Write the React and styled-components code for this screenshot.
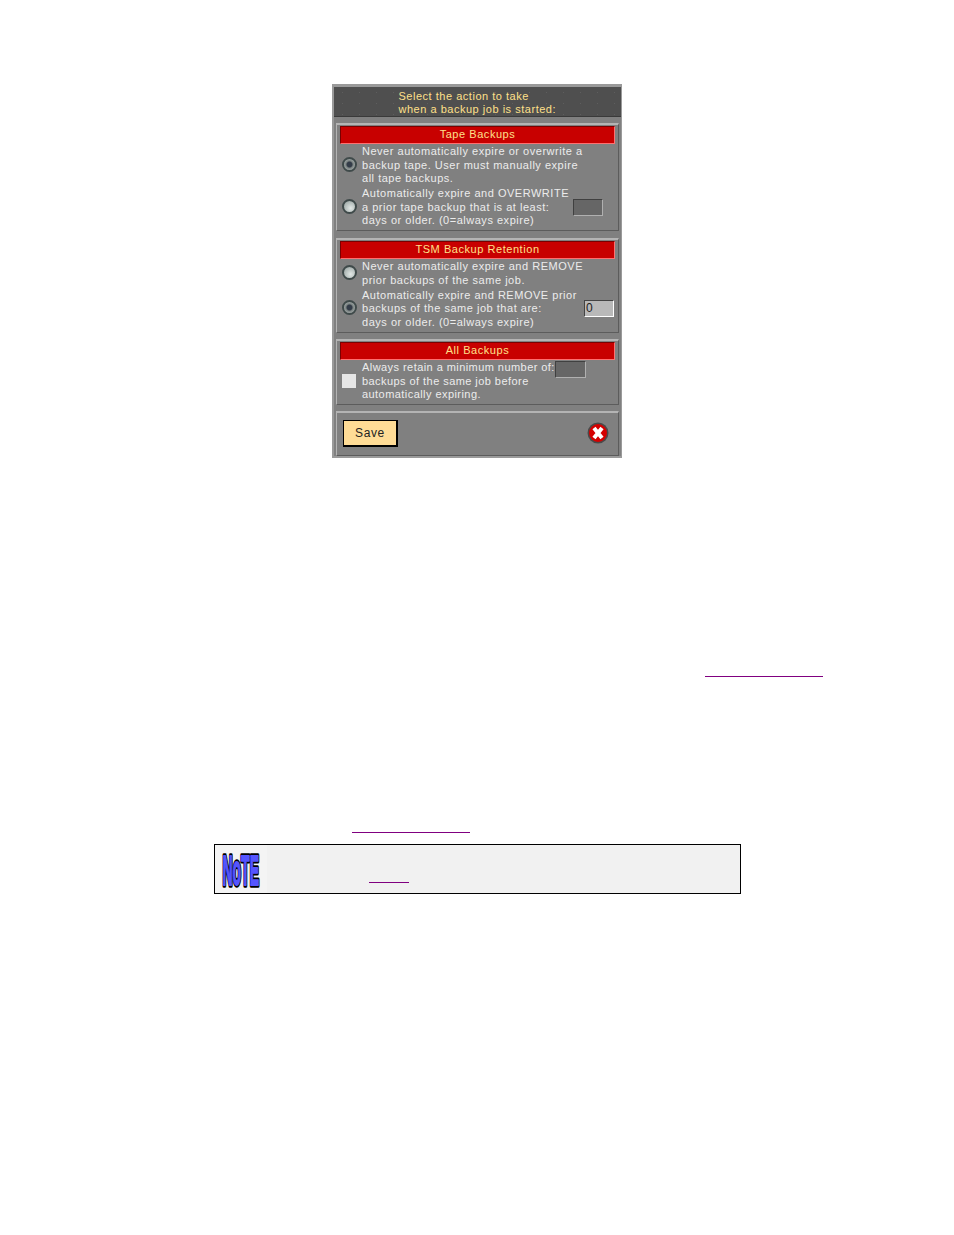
import React from "react";
import styled, { createGlobalStyle } from "styled-components";

const Global = createGlobalStyle`
  html, body { margin: 0; padding: 0; background: #fff; }
  body { font-family: "Liberation Sans", Arial, sans-serif; }
`;

const Page = styled.div`
  width: 954px;
  height: 1235px;
  padding-top: 84px;
  box-sizing: border-box;
  display: flex;
  flex-direction: column;
  overflow: hidden;
`;

const Dialog = styled.div`
  width: 290px;
  height: 374px;
  margin: 0 auto;
  box-sizing: border-box;
  background: #808080;
  border: 2px solid #9a9a9a;
  border-top-width: 3px;
  border-right-width: 1px;
  display: flex;
  flex-direction: column;
`;

const TitleBar = styled.div`
  height: 30px;
  background-color: #4f4f4f;
  background-image: radial-gradient(circle, #5e5e5e 0 0.6px, transparent 1px);
  background-size: 17px 11px;
  border-bottom: 1px solid #3a3a3a;
  color: #ffe08a;
  font-size: 11px;
  letter-spacing: 0.52px;
  line-height: 13px;
  display: flex;
  justify-content: center;
  padding-top: 3px;
  box-sizing: border-box;
`;

const TitleText = styled.div`
  width: 158px;
  white-space: nowrap;
`;

const Section = styled.div`
  height: ${(p) => p.$h}px;
  margin: ${(p) => p.$top}px 2px 0 2px;
  box-sizing: border-box;
  border: solid;
  border-color: #b4b4b4 #5c5c5c #5c5c5c #b4b4b4;
  border-width: 2px 1px 1px 1px;
  padding: 1px 3px 0 3px;
`;

const SectionHeader = styled.div`
  height: 18px;
  margin-bottom: 1px;
  box-sizing: border-box;
  background: #c80000;
  border: 1px solid;
  border-color: #7a0000 #ff7070 #ff7070 #7a0000;
  color: #ffe08a;
  font-size: 11px;
  letter-spacing: 0.55px;
  line-height: 15px;
  text-align: center;
`;

const Row = styled.div`
  display: flex;
  align-items: ${(p) => (p.$top ? "flex-start" : "center")};
  height: ${(p) => p.$lines * 13.7}px;
  margin-bottom: 1px;
`;

const Radio = styled.span`
  flex: none;
  width: 15px;
  height: 15px;
  margin: 0 5px 2px 2px;
  box-sizing: border-box;
  border-radius: 50%;
  border: 2px solid #3f4a4a;
  background: ${(p) =>
    p.$on
      ? "radial-gradient(circle, #333c48 0 2.5px, #78807f 3.5px, #c8d0cf 100%)"
      : "radial-gradient(circle at 60% 65%, #e2e8e6 0, #a9b3b1 70%, #8d9795 100%)"};
`;

const Check = styled.span`
  flex: none;
  align-self: center;
  width: 14px;
  height: 14px;
  margin: 0 6px 2px 2px;
  background: #e6e6e6;
`;

const Label = styled.div`
  flex: none;
  width: ${(p) => p.$w}px;
  color: #ececec;
  font-size: 11px;
  letter-spacing: ${(p) => (p.$tight ? 0.44 : 0.52)}px;
  line-height: 13.5px;
  white-space: nowrap;
`;

const Field = styled.div`
  flex: none;
  width: ${(p) => p.$w || 30}px;
  height: 17px;
  box-sizing: border-box;
  margin-bottom: ${(p) => (p.$raised ? 1 : 0)}px;
  background: ${(p) => (p.$filled ? "#b9b9b9" : "#666")};
  border: 1px solid;
  border-color: ${(p) =>
    p.$filled ? "#444 #fff #fff #444" : "#404040 #b0b0b0 #b0b0b0 #404040"};
  color: #222;
  font-size: 12px;
  line-height: 15px;
  padding-left: 1px;
`;

const ActionBar = styled(Section)`
  display: flex;
  align-items: center;
  justify-content: space-between;
  padding: 0 9px 2px 6px;
`;

const SaveButton = styled.button`
  width: 55px;
  height: 27px;
  padding: 0;
  box-sizing: border-box;
  background: #ffdc96;
  border: 1px solid #000;
  border-width: 1px 2px 2px 1px;
  color: #222;
  font-family: inherit;
  font-size: 12px;
  letter-spacing: 0.6px;
`;

const CloseIcon = () => (
  <svg width="22" height="22" viewBox="0 0 22 22">
    <circle cx="11" cy="11" r="10.5" fill="#4a4a4a" />
    <circle cx="11" cy="11" r="9" fill="#d40000" />
    <path d="M7 6 L15 16 M15 6 L7 16" stroke="#fff" strokeWidth="4" />
  </svg>
);

const LinkRow = styled.div`
  height: 1px;
  margin-top: ${(p) => p.$top}px;
  padding-left: ${(p) => p.$left}px;
`;

const Rule = styled.a`
  display: block;
  width: ${(p) => p.$w}px;
  height: 1px;
  background: #800080;
`;

const Note = styled.div`
  width: 527px;
  height: 50px;
  margin: 11px 0 0 214px;
  box-sizing: border-box;
  border: 1px solid #000;
  background: #f1f1f1;
  display: flex;
`;

const NoteIconCell = styled.div`
  width: 52px;
  background: #f4f4f4;
  padding-left: 6px;
  box-sizing: border-box;
`;

const NoteBody = styled.div`
  padding: 37px 0 0 102px;
`;

const LogoText = styled.text`
  font-family: "Liberation Sans", sans-serif;
  font-weight: 700;
  font-size: 20px;
  fill: #5555ff;
  stroke: ${(p) => p.$edge};
  stroke-width: ${(p) => p.$sw};
  stroke-linejoin: round;
`;

const NoteLogo = () => (
  <svg width="40" height="48" viewBox="-2 -19 57 23" preserveAspectRatio="none">
    <LogoText $edge="#000" $sw={2.6}>NoTE</LogoText>
    <LogoText $edge="#5555ff" $sw={0.9} aria-hidden="true">NoTE</LogoText>
  </svg>
);

export default function App() {
  return (
    <Page>
      <Global />
      <Dialog>
        <TitleBar>
          <TitleText>
            Select the action to take
            <br />
            when a backup job is started:
          </TitleText>
        </TitleBar>

        <Section $top={6} $h={108}>
          <SectionHeader>Tape Backups</SectionHeader>
          <Row $lines={3}>
            <Radio $on />
            <Label $w={211}>
              Never automatically expire or overwrite a
              <br />
              backup tape. User must manually expire
              <br />
              all tape backups.
            </Label>
          </Row>
          <Row $lines={3}>
            <Radio />
            <Label $w={211}>
              Automatically expire and OVERWRITE
              <br />a prior tape backup that is at least:
              <br />
              days or older. (0=always expire)
            </Label>
            <Field $raised />
          </Row>
        </Section>

        <Section $top={7} $h={95}>
          <SectionHeader>TSM Backup Retention</SectionHeader>
          <Row $lines={2}>
            <Radio />
            <Label $w={222}>
              Never automatically expire and REMOVE
              <br />
              prior backups of the same job.
            </Label>
          </Row>
          <Row $lines={3}>
            <Radio $on />
            <Label $w={222}>
              Automatically expire and REMOVE prior
              <br />
              backups of the same job that are:
              <br />
              days or older. (0=always expire)
            </Label>
            <Field $filled $raised>0</Field>
          </Row>
        </Section>

        <Section $top={6} $h={66}>
          <SectionHeader>All Backups</SectionHeader>
          <Row $lines={3} $top>
            <Check />
            <Label $w={193} $tight>
              Always retain a minimum number of:
              <br />
              backups of the same job before
              <br />
              automatically expiring.
            </Label>
            <Field $w={31} />
          </Row>
        </Section>

        <ActionBar $top={6} $h={45}>
          <SaveButton>Save</SaveButton>
          <CloseIcon />
        </ActionBar>
      </Dialog>

      <LinkRow $top={218} $left={705}>
        <Rule $w={118} />
      </LinkRow>
      <LinkRow $top={155} $left={352}>
        <Rule $w={118} />
      </LinkRow>

      <Note>
        <NoteIconCell>
          <NoteLogo />
        </NoteIconCell>
        <NoteBody>
          <Rule $w={40} />
        </NoteBody>
      </Note>
    </Page>
  );
}
